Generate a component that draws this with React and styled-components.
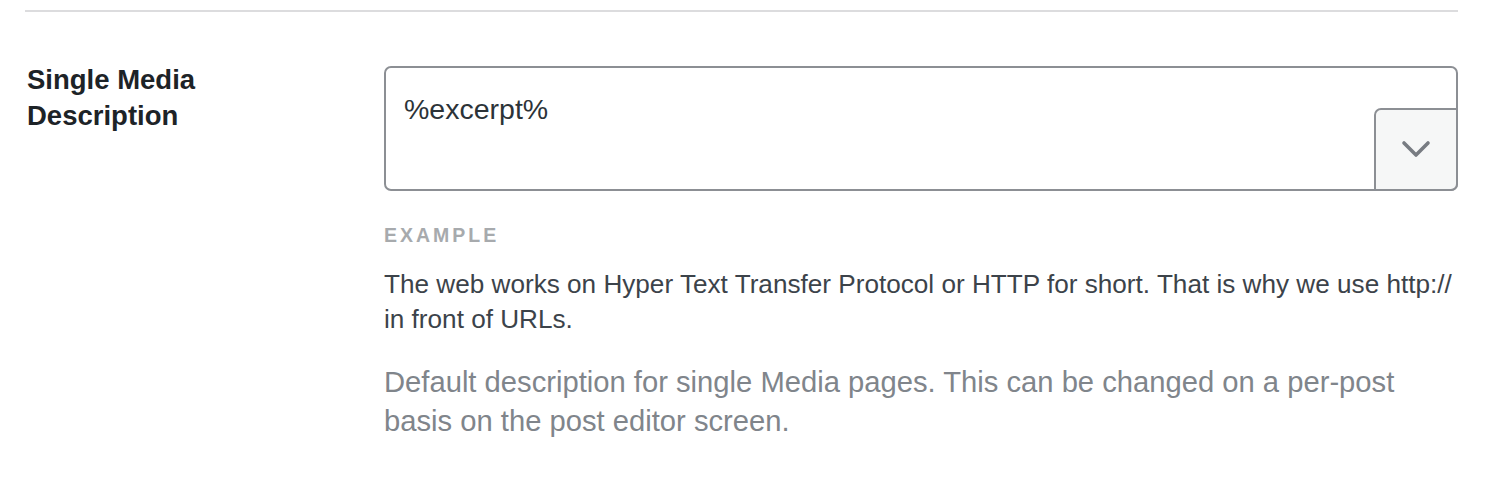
import { createGlobalStyle, styled } from 'styled-components'

const GlobalStyle = createGlobalStyle`
  html, body {
    margin: 0;
    padding: 0;
    background: #ffffff;
    font-family: "Liberation Sans", Arial, sans-serif;
  }
`

const Page = styled.div`
  width: 1498px;
  height: 488px;
  padding: 10px 40px 0 25px;
  box-sizing: border-box;
  background: #fff;
`

const Divider = styled.hr`
  margin: 0;
  border: 0;
  height: 2px;
  background: #dcdcde;
`

const FieldRow = styled.div`
  display: grid;
  grid-template-columns: 359px 1fr;
  align-items: start;
  padding-top: 50px;
`

const Label = styled.label`
  padding-left: 2px;
  font-size: 27.5px;
  line-height: 36px;
  font-weight: 700;
  color: #1d2327;
`

const Control = styled.div`
  display: flex;
  flex-direction: column;
  padding-top: 4px;
`

const InputWrap = styled.div`
  position: relative;
  height: 125px;
`

const TextArea = styled.textarea`
  display: block;
  width: 100%;
  height: 100%;
  box-sizing: border-box;
  margin: 0;
  padding: 23px 18px 0;
  border: 2px solid #8c8f94;
  border-radius: 7px;
  resize: none;
  overflow: hidden;
  font-family: "Liberation Sans", Arial, sans-serif;
  font-size: 28.5px;
  line-height: 36px;
  color: #2c3338;
  background: #fff;
  outline: none;
`

const VariableButton = styled.button`
  position: absolute;
  right: 0;
  bottom: 0;
  width: 84px;
  height: 83px;
  box-sizing: border-box;
  border: 2px solid #8c8f94;
  border-radius: 7px 0 7px 0;
  background: #f6f7f7;
  display: flex;
  align-items: center;
  justify-content: center;
  padding: 0 0 1px;
  cursor: pointer;
`

const ExampleTitle = styled.div`
  margin-top: 34px;
  font-size: 19.5px;
  line-height: 20px;
  font-weight: 700;
  letter-spacing: 3px;
  color: #a7aaad;
  text-transform: uppercase;
`

const ExampleText = styled.p`
  margin: 22px 0 0;
  font-size: 26.15px;
  line-height: 35px;
  color: #3c434a;
`

const Description = styled.p`
  margin: 26px 0 0;
  font-size: 29.2px;
  line-height: 39px;
  color: #80858b;
`

const Chevron = () => (
  <svg width="30" height="18" viewBox="0 0 30 18" fill="none">
    <path d="M3 3 L15 15 L27 3" stroke="#787c82" strokeWidth="3.6" strokeLinecap="round" strokeLinejoin="round" />
  </svg>
)

const App = () => {
  return (
    <Page>
      <GlobalStyle />
      <Divider />
      <FieldRow>
        <Label htmlFor="single-media-description">Single Media<br />Description</Label>
        <Control>
          <InputWrap>
            <TextArea id="single-media-description" defaultValue="%excerpt%" />
            <VariableButton type="button" aria-label="Insert variable">
              <Chevron />
            </VariableButton>
          </InputWrap>
          <ExampleTitle>Example</ExampleTitle>
          <ExampleText>
            The web works on Hyper Text Transfer Protocol or HTTP for short. That is why we use http://<br />
            in front of URLs.
          </ExampleText>
          <Description>
            Default description for single Media pages. This can be changed on a per-post<br />
            basis on the post editor screen.
          </Description>
        </Control>
      </FieldRow>
    </Page>
  )
}

export default App
